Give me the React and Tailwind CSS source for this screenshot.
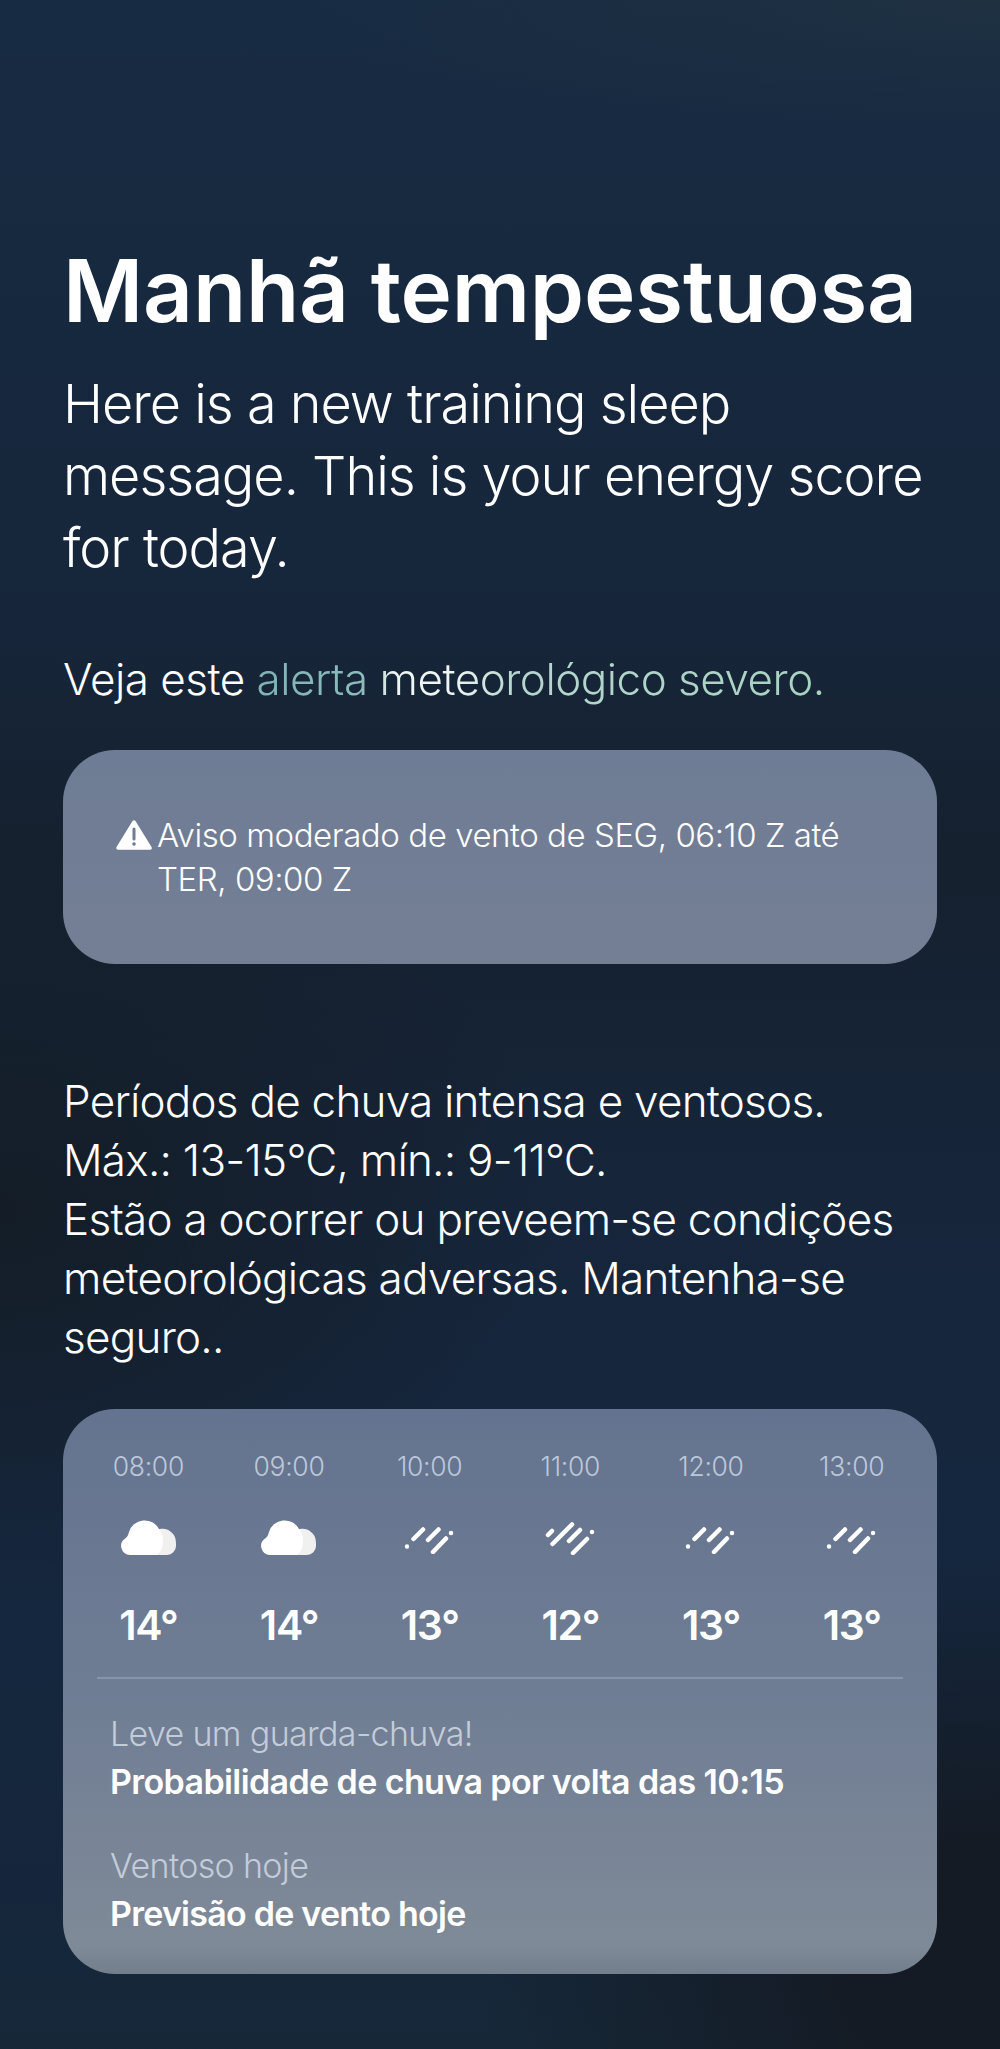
const hours = [
  { t: "08:00", i: "cloud", d: "14°" },
  { t: "09:00", i: "cloud", d: "14°" },
  { t: "10:00", i: "rain", d: "13°" },
  { t: "11:00", i: "heavy", d: "12°" },
  { t: "12:00", i: "rain", d: "13°" },
  { t: "13:00", i: "rain", d: "13°" },
];

function Cloud() {
  return (
    <svg width="55" height="36" viewBox="0 0 55 36">
      <path d="M36 36 V11 C40 9 46 9 50 13 C54 16 55 20 55 25 V27 A9 9 0 0 1 46 36 Z" fill="#f0f0f0" />
      <path d="M9 36 A9 9 0 0 1 4.500 19.300 C6 18 7 17 8 13 A16 15 0 0 1 38 10 C41 13 42 17 42 22 C42 28 40 33 36 36 Z" fill="#fff" />
    </svg>
  );
}

function Rain() {
  return (
    <svg width="51" height="27" viewBox="0 0 51 27" fill="none" stroke="#fff" strokeWidth="4.500" strokeLinecap="round">
      <path d="M3 19.500 h.01 M9.500 12 L19 2.500 M24 13 L34.500 2.500 M29 25 L42 11.500 M47 6 h.01" />
    </svg>
  );
}

function Heavy() {
  return (
    <svg width="51" height="33" viewBox="0 0 51 33" fill="none" stroke="#fff" strokeWidth="4.500" strokeLinecap="round">
      <path d="M3 13 L7 9 M7.500 22 L27 2.500 M24 19 L35 8 M28 31 L42 17 M47 10 h.01" />
    </svg>
  );
}

export default function App() {
  return (
    <div className="relative w-[1000px] h-[2049px] overflow-hidden bg-[radial-gradient(ellipse_700px_130px_at_100%_0%,#1f3141_0%,transparent_100%),radial-gradient(ellipse_560px_400px_at_0%_59%,#141d27_0%,transparent_100%),radial-gradient(ellipse_520px_420px_at_100%_96%,#141b25_0%,#141b25_30%,transparent_100%),linear-gradient(180deg,#172b43_0%,#17293f_13%,#16263b_28%,#15212f_42%,#16253a_58%,#15273f_75%,#15263c_92%,#162838_100%)] text-white font-['Inter','Liberation_Sans',sans-serif] px-[63px] pt-[238px]">
      <h1 className="text-[87px] leading-[106px] font-semibold tracking-[-0.15px] whitespace-nowrap">Manhã tempestuosa</h1>
      <p className="mt-[24px] text-[54px] leading-[72px] font-[350] tracking-[-1px] w-[880px]">
        Here is a new training sleep<br />message. This is your energy score<br />for today.
      </p>
      <p className="mt-[67px] text-[44px] leading-[56px] font-[350] tracking-[-0.5px] whitespace-nowrap">
        Veja este <span className="bg-[linear-gradient(90deg,#7fb3b5_0%,#8dbcbc_19%,#eef5f2_24%,#eef5f2_35%,#b5d6cf_45%,#a8d2c0_100%)] bg-clip-text text-transparent">alerta meteorológico severo.</span>
      </p>
      <div className="mt-[43px] h-[214px] rounded-[52px] bg-[linear-gradient(180deg,#6e7c95,#747f94)] pl-[53px] pr-[60px] pt-[62px] flex items-start gap-[5px]">
        <svg className="shrink-0 mt-[8px]" width="36" height="30" viewBox="0 0 36 30">
          <path d="M18 2 L34 28 H2 Z" fill="#fff" stroke="#fff" strokeWidth="3.500" strokeLinejoin="round" />
          <path d="M18 9 V19" stroke="#6f7c95" strokeWidth="3" strokeLinecap="round" />
          <circle cx="18" cy="24" r="1.800" fill="#6f7c95" />
        </svg>
        <p className="text-[33px] leading-[44px] font-[350] tracking-[-0.45px] mt-[1px]">
          Aviso moderado de vento de SEG, 06:10 Z até<br />TER, 09:00 Z
        </p>
      </div>
      <p className="mt-[108px] text-[44px] leading-[59px] font-[350] tracking-[-0.75px] w-[880px]">
        Períodos de chuva intensa e ventosos.<br />
        Máx.: 13-15°C, mín.: 9-11°C.<br />
        Estão a ocorrer ou preveem-se condições<br />meteorológicas adversas. Mantenha-se<br />seguro..
      </p>
      <div className="mt-[42px] h-[565px] rounded-[52px] bg-[linear-gradient(180deg,#64738f_0%,#6f7d94_50%,#7f8a98_95%,#737e8d_100%)] pt-[41px]">
        <div className="grid grid-cols-6 mx-[15px]">
          {hours.map((h) => (
            <div key={h.t} className="flex flex-col items-center">
              <div className="text-[26.5px] leading-[32px] font-[350] text-[#bcc8da] tracking-[-0.3px]">{h.t}</div>
              <div className="h-[79px] mt-[39px] flex items-start justify-center">
                {h.i === "cloud" ? <div className="mt-[-2px]"><Cloud /></div> : h.i === "rain" ? <div className="mt-[6px]"><Rain /></div> : <div className="mt-[1px]"><Heavy /></div>}
              </div>
              <div className="text-[41px] leading-[50px] font-semibold tracking-[-1.3px]">{h.d}</div>
            </div>
          ))}
        </div>
        <div className="mx-[34px] mt-[27px] h-[2px] bg-[#8496af]" />
        <div className="px-[47px] pt-[33px]">
          <div className="text-[34px] leading-[44px] font-[350] text-[#c3ccd9] tracking-[-0.65px]">Leve um guarda-chuva!</div>
          <div className="text-[34px] leading-[44px] font-semibold tracking-[-0.6px] mt-[4px]">Probabilidade de chuva por volta das 10:15</div>
          <div className="text-[34px] leading-[44px] font-[350] text-[#c3ccd9] tracking-[-0.65px] mt-[40px]">Ventoso hoje</div>
          <div className="text-[34px] leading-[44px] font-semibold tracking-[-0.75px] mt-[4px]">Previsão de vento hoje</div>
        </div>
      </div>
    </div>
  );
}
